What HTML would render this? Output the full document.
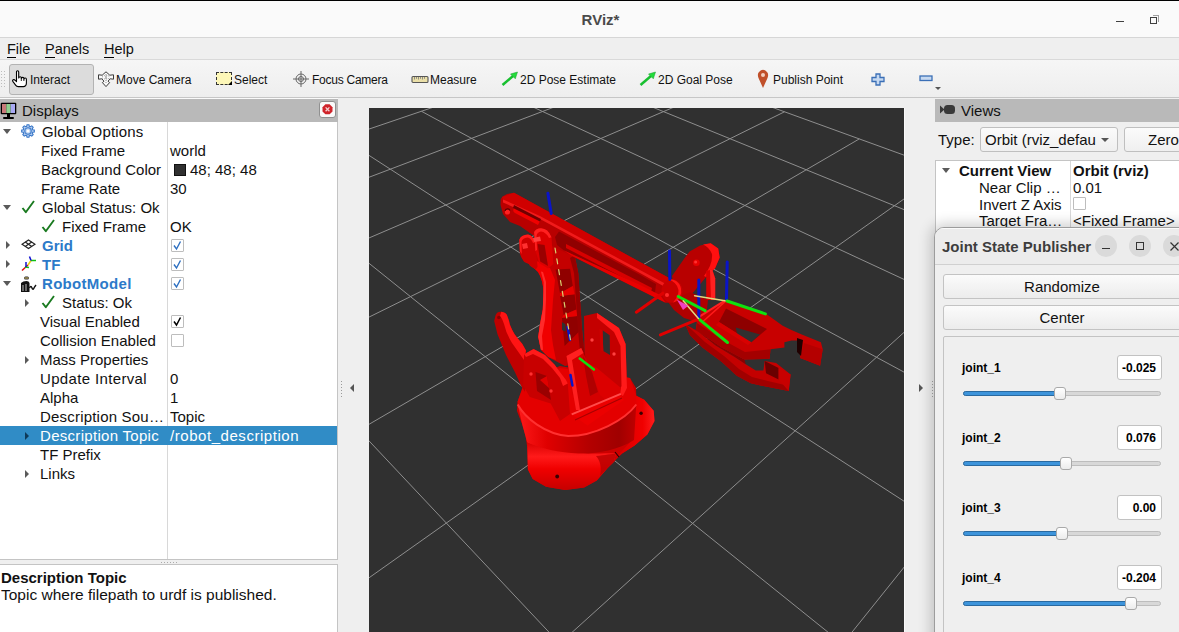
<!DOCTYPE html>
<html><head><meta charset="utf-8">
<style>
*{margin:0;padding:0;box-sizing:border-box}
html,body{width:1179px;height:632px;overflow:hidden;background:#efefef;font-family:"Liberation Sans",sans-serif;color:#111}
.a{position:absolute}
.t{position:absolute;white-space:nowrap}
#title{left:0;top:0;width:1179px;height:38px;background:#fafafa;border-top:1px solid #000;border-bottom:1px solid #d6d6d6}
#menu{left:0;top:38px;width:1179px;height:22px;background:#efefef;border-bottom:1px solid #d9d9d9}
#tool{left:0;top:60px;width:1179px;height:38px;background:linear-gradient(#f6f6f6,#eeeeee);border-bottom:1px solid #c6c6c6}
.mi{font-size:14.5px;top:0;line-height:22px}
.mi u{text-decoration:none;border-bottom:1px solid #000;}
.tb{font-size:12px;line-height:14px;top:13px}
.hdr{background:#b9b9b9;height:23px;top:99px}
.tree{background:#fff;border-right:1px solid #c4c4c4}
.r{position:absolute;white-space:nowrap;font-size:15px;line-height:19px;height:19px}
.blue{color:#2c7ac9;font-weight:bold}
.cb{position:absolute;width:13px;height:13px;border:1px solid #bdbdbd;background:#fff;border-radius:1px}
.ad{position:absolute;width:0;height:0;border-left:4px solid transparent;border-right:4px solid transparent;border-top:5px solid #5a5a5a}
.ar{position:absolute;width:0;height:0;border-top:4px solid transparent;border-bottom:4px solid transparent;border-left:4px solid #5a5a5a}
.vr{position:absolute;white-space:nowrap;font-size:15px;line-height:17px;height:17px}
.jl{position:absolute;white-space:nowrap;font-size:12px;font-weight:bold;line-height:14px;color:#000}
.jv{position:absolute;width:45px;height:25px;background:#fff;border:1px solid #c2c2c2;border-radius:3px;font-size:12px;font-weight:bold;line-height:25px;text-align:right;padding-right:5px;color:#000}
.gr{position:absolute;left:963px;width:198px;height:5px;border-radius:3px;background:#d8d8d8;border:1px solid #bdbdbd}
.gf{position:absolute;left:963px;height:5px;border-radius:3px;background:#3d94db;border:1px solid #2a6aa0}
.hd{position:absolute;width:12px;height:13px;background:linear-gradient(#ffffff,#ececec);border:1px solid #a9a9a9;border-radius:3px}
.btn{position:absolute;background:linear-gradient(#fbfbfb,#ececec);border:1px solid #c3c3c3;border-radius:3px;font-size:15px;text-align:center;color:#111}
</style></head><body>

<!-- Title bar -->
<div id="title" class="a">
  <div class="t" style="left:0;width:1179px;text-align:center;top:9px;font-size:15px;font-weight:bold;color:#4a4a4a;line-height:19px;padding-left:22px">RViz*</div>
  <div class="a" style="left:1116px;top:20px;width:8px;height:1.2px;background:#404040"></div>
  <div class="a" style="left:1150px;top:16px;width:6.5px;height:6.5px;border:1.2px solid #404040"></div>
  <div class="a" style="left:1152.5px;top:14px;width:6px;height:6.5px;border-top:1px solid #a0a0a0;border-right:1px solid #a0a0a0"></div>
</div>

<!-- Menu bar -->
<div id="menu" class="a">
  <div class="t mi" style="left:7px"><u>F</u>ile</div>
  <div class="t mi" style="left:45px"><u>P</u>anels</div>
  <div class="t mi" style="left:104px"><u>H</u>elp</div>
</div>

<!-- Toolbar -->
<div id="tool" class="a">
  <svg class="a" style="left:0;top:10px" width="8" height="18"><g fill="#bdbdbd"><rect x="1" y="1" width="1" height="1"/><rect x="4" y="1" width="1" height="1"/><rect x="1" y="4" width="1" height="1"/><rect x="4" y="4" width="1" height="1"/><rect x="1" y="7" width="1" height="1"/><rect x="4" y="7" width="1" height="1"/><rect x="1" y="10" width="1" height="1"/><rect x="4" y="10" width="1" height="1"/><rect x="1" y="13" width="1" height="1"/><rect x="4" y="13" width="1" height="1"/><rect x="1" y="16" width="1" height="1"/><rect x="4" y="16" width="1" height="1"/></g></svg>
  <div class="a" style="left:9px;top:4px;width:85px;height:31px;background:#dcdcdc;border:1px solid #b3b3b3;border-radius:3px"></div>
  <!-- hand icon -->
  <svg class="a" style="left:11px;top:10px" width="18" height="18" viewBox="0 0 18 18"><path d="M5.5 2 Q5.5 0.8 6.6 0.8 Q7.7 0.8 7.7 2 V8 Q8.1 6.8 9.2 6.8 Q10.3 6.8 10.3 8 V8.5 Q10.7 7.4 11.8 7.4 Q12.9 7.4 12.9 8.5 V9 Q13.3 8 14.3 8 Q15.4 8 15.4 9.2 V13 Q15.4 16.6 12.2 16.6 H7.2 Q5.6 16.6 4.6 15.1 L1.8 11.3 Q1.2 10.3 2.2 9.8 Q3.2 9.3 4.2 10.3 L5.5 11.6 Z" fill="#fff" stroke="#000" stroke-width="1.1" stroke-linejoin="round"/><path d="M10.3 8.5 V11 M12.9 9 V11" stroke="#000" stroke-width="0.9"/></svg>
  <div class="t tb" style="left:30px">Interact</div>
  <!-- move camera icon -->
  <svg class="a" style="left:97px;top:11px" width="18" height="17" viewBox="0 0 18 17"><path d="M9 0.8 L12.8 4.2 L16.5 3.8 L16.5 8.2 L13.2 7.8 L11 10.2 L12.6 11.6 L9 15.6 L5.4 11.6 L7 10.2 L4.8 7.8 L1.5 8.2 L1.5 3.8 L5.2 4.2 Z" fill="#fafafa" stroke="#3a3a3a" stroke-width="1"/><path d="M5 5.5 Q9 3.5 13 5.5 M5 7 Q9 9 13 7 M9 3 V12" stroke="#777" stroke-width="0.8" fill="none" stroke-dasharray="1 1"/><rect x="8" y="4.8" width="2" height="2.6" fill="#bbb"/></svg>
  <div class="t tb" style="left:116px">Move Camera</div>
  <!-- select icon -->
  <div class="a" style="left:216px;top:12px;width:16px;height:13px;background:#fdf7b8;border:1px dashed #333"></div>
  <div class="a" style="left:228px;top:21px;width:0;height:0;border-left:4px solid transparent;border-bottom:4px solid #000"></div>
  <div class="t tb" style="left:234px">Select</div>
  <!-- focus camera -->
  <svg class="a" style="left:292px;top:10px" width="18" height="18" viewBox="0 0 18 18"><g fill="none" stroke="#666" stroke-width="1"><circle cx="9" cy="9" r="5"/><circle cx="9" cy="9" r="2.5"/><path d="M9 1 V17 M1 9 H17"/></g></svg>
  <div class="t tb" style="left:312px;letter-spacing:-0.25px">Focus Camera</div>
  <!-- measure -->
  <svg class="a" style="left:411px;top:15px" width="18" height="9" viewBox="0 0 18 9"><rect x="1" y="1.5" width="16" height="6" rx="1" fill="#eadfa8" stroke="#555" stroke-width="1.1"/><path d="M3.5 2 V4.5 M5.5 2 V3.8 M7.5 2 V4.5 M9.5 2 V3.8 M11.5 2 V4.5 M13.5 2 V3.8" stroke="#777" stroke-width="0.8"/></svg>
  <div class="t tb" style="left:430px">Measure</div>
  <!-- pose estimate -->
  <svg class="a" style="left:501px;top:11px" width="18" height="16" viewBox="0 0 18 16"><path d="M1.5 14 L12 5" stroke="#18c030" stroke-width="2.5"/><path d="M9.5 3 L16.5 1 L14.3 7.8 Z" fill="#22dd3a" stroke="#149a28" stroke-width="0.5"/></svg>
  <div class="t tb" style="left:520px">2D Pose Estimate</div>
  <svg class="a" style="left:639px;top:11px" width="18" height="16" viewBox="0 0 18 16"><path d="M1.5 14 L12 5" stroke="#18c030" stroke-width="2.5"/><path d="M9.5 3 L16.5 1 L14.3 7.8 Z" fill="#22dd3a" stroke="#149a28" stroke-width="0.5"/></svg>
  <div class="t tb" style="left:658px">2D Goal Pose</div>
  <!-- publish point -->
  <svg class="a" style="left:757px;top:9px" width="12" height="20" viewBox="0 0 12 20"><path d="M6 19 L1.5 9 Q0 5 2 3 Q4 0.8 6 0.8 Q8 0.8 10 3 Q12 5 10.5 9 Z" fill="#c0502a"/><circle cx="6" cy="6" r="2" fill="#f3d0c0"/></svg>
  <div class="t tb" style="left:773px">Publish Point</div>
  <!-- plus -->
  <svg class="a" style="left:871px;top:13px" width="14" height="13" viewBox="0 0 14 13"><path d="M5 1 H9 V4.5 H13 V8.5 H9 V12 H5 V8.5 H1 V4.5 H5 Z" fill="#c6d9f1" stroke="#3b6fb6" stroke-width="1.3"/></svg>
  <svg class="a" style="left:919px;top:15px" width="14" height="7" viewBox="0 0 14 7"><rect x="1" y="1" width="12" height="4.5" fill="#c6d9f1" stroke="#3b6fb6" stroke-width="1.3"/></svg>
  <div class="a" style="left:935px;top:27px;width:0;height:0;border-left:3px solid transparent;border-right:3px solid transparent;border-top:3px solid #555"></div>
</div>

<!-- Left dock -->
<div class="a" style="left:0;top:98px;width:338px;height:1px;background:#fafafa"></div>
<div class="a hdr" style="left:0;width:338px"></div>
<svg class="a" style="left:0;top:102px" width="18" height="19" viewBox="0 0 18 19"><rect x="0.7" y="0.7" width="15.6" height="11.6" rx="1" fill="#000"/><rect x="2" y="2" width="4.3" height="9" fill="#c87a7a"/><rect x="6.3" y="2" width="4.4" height="9" fill="#8fd08f"/><rect x="10.7" y="2" width="4.3" height="9" fill="#a9a9f3"/><rect x="7" y="12" width="3" height="3" fill="#000"/><rect x="3" y="15" width="11" height="2" rx="1" fill="#000"/></svg>
<div class="t" style="left:22px;top:99px;font-size:15px;line-height:23px">Displays</div>
<div class="a" style="left:319px;top:101px;width:17px;height:17px;background:#fafafa;border:1px solid #909090;border-radius:3px"></div>
<svg class="a" style="left:320px;top:102px" width="15" height="15" viewBox="0 0 15 15"><path d="M5.4 2.3 H9.6 L12.5 5.2 V9.4 L9.6 12.3 H5.4 L2.5 9.4 V5.2 Z" fill="#d0242b"/><path d="M5.6 5.4 L9.4 9.2 M9.4 5.4 L5.6 9.2" stroke="#f4d4d4" stroke-width="1.3"/></svg>

<div class="a tree" style="left:0;top:122px;width:338px;height:438px"></div>
<div class="a" style="left:167px;top:122px;width:1px;height:438px;background:#d8d8d8"></div>
<!-- selection row -->
<div class="a" style="left:0;top:426px;width:337px;height:19px;background:#308cc6"></div>

<!-- Tree rows -->
<div class="ad" style="left:3px;top:129px"></div>
<svg class="a" style="left:21px;top:124px" width="14" height="14" viewBox="0 0 14 14"><path d="M11.72 5.67 L13.32 6.02 L13.32 7.98 L11.72 8.33 L11.28 9.39 L12.17 10.78 L10.78 12.17 L9.39 11.28 L8.33 11.72 L7.98 13.32 L6.02 13.32 L5.67 11.72 L4.61 11.28 L3.22 12.17 L1.83 10.78 L2.72 9.39 L2.28 8.33 L0.68 7.98 L0.68 6.02 L2.28 5.67 L2.72 4.61 L1.83 3.22 L3.22 1.83 L4.61 2.72 L5.67 2.28 L6.02 0.68 L7.98 0.68 L8.33 2.28 L9.39 2.72 L10.78 1.83 L12.17 3.22 L11.28 4.61 Z" fill="#b4cdf0" stroke="#3a78c8" stroke-width="1.1"/><circle cx="7" cy="7" r="3.2" fill="none" stroke="#3a78c8" stroke-width="1.1"/><circle cx="7" cy="7" r="1.6" fill="#fff"/></svg>
<div class="r" style="left:42px;top:122px;letter-spacing:0.15px">Global Options</div>
<div class="r" style="left:41px;top:141px">Fixed Frame</div><div class="r" style="left:170px;top:141px">world</div>
<div class="r" style="left:41px;top:160px">Background Color</div>
<div class="a" style="left:174px;top:164px;width:12px;height:12px;background:#303030;border:1px solid #111"></div>
<div class="r" style="left:190px;top:160px">48; 48; 48</div>
<div class="r" style="left:41px;top:179px">Frame Rate</div><div class="r" style="left:170px;top:179px">30</div>
<div class="ad" style="left:3px;top:205px"></div>
<svg class="a" style="left:20px;top:199px" width="16" height="16" viewBox="0 0 16 16"><path d="M2.5 9 L5.8 13.2 L14 2" fill="none" stroke="#1a7a20" stroke-width="1.9" stroke-linejoin="round"/></svg>
<div class="r" style="left:42px;top:198px">Global Status: Ok</div>
<svg class="a" style="left:40px;top:218px" width="16" height="16" viewBox="0 0 16 16"><path d="M2.5 9 L5.8 13.2 L14 2" fill="none" stroke="#1a7a20" stroke-width="1.9" stroke-linejoin="round"/></svg>
<div class="r" style="left:62px;top:217px">Fixed Frame</div><div class="r" style="left:170px;top:217px">OK</div>
<div class="ar" style="left:6px;top:241px"></div>
<svg class="a" style="left:21px;top:239px" width="15" height="11" viewBox="0 0 15 11"><g fill="none" stroke="#222" stroke-width="1.2"><path d="M7.5 1 L14 5.2 L7.5 9.5 L1 5.2 Z"/><path d="M4.2 3 L10.8 7.4 M10.8 3 L4.2 7.4"/></g></svg>
<div class="r blue" style="left:42px;top:236px">Grid</div>
<div class="cb" style="left:171px;top:239px"></div>
<svg class="a" style="left:171px;top:239px" width="13" height="13" viewBox="0 0 13 13"><path d="M3 6.5 L5.5 10 L9.5 2.5" fill="none" stroke="#2d6fc0" stroke-width="1.4"/></svg>
<div class="ar" style="left:6px;top:260px"></div>
<svg class="a" style="left:20px;top:256px" width="17" height="16" viewBox="0 0 17 16"><g fill="none" stroke-width="1.5"><path d="M8 9 L2 14.5" stroke="#e01010"/><path d="M8 9 L11 4.5" stroke="#e8d010"/><path d="M11 4.5 L16 4.5" stroke="#10c010"/><path d="M11 4.5 L9.5 0.5" stroke="#1010d0"/><path d="M5 11 L9 11.5" stroke="#10c010"/><path d="M6 11 L6 6" stroke="#1010d0"/></g></svg>
<div class="r blue" style="left:42px;top:255px">TF</div>
<div class="cb" style="left:171px;top:258px"></div>
<svg class="a" style="left:171px;top:258px" width="13" height="13" viewBox="0 0 13 13"><path d="M3 6.5 L5.5 10 L9.5 2.5" fill="none" stroke="#2d6fc0" stroke-width="1.4"/></svg>
<div class="ad" style="left:3px;top:281px"></div>
<svg class="a" style="left:20px;top:276px" width="17" height="17" viewBox="0 0 17 17"><rect x="4" y="0.5" width="5" height="3" rx="1.5" fill="#223" /><rect x="4.5" y="1.5" width="4" height="1" fill="#e8d060"/><path d="M1 16 V7 Q3 5 6.5 5 Q9 5 9.5 7 V16 Z" fill="#111"/><path d="M3 9 V15 M6 8 V15" stroke="#eee" stroke-width="0.8"/><path d="M9.5 12 Q11 9 12 12 Q13 15 14.5 11 L16 9" fill="none" stroke="#111" stroke-width="1.4"/></svg>
<div class="r blue" style="left:42px;top:274px;letter-spacing:0.3px">RobotModel</div>
<div class="cb" style="left:171px;top:277px"></div>
<svg class="a" style="left:171px;top:277px" width="13" height="13" viewBox="0 0 13 13"><path d="M3 6.5 L5.5 10 L9.5 2.5" fill="none" stroke="#2d6fc0" stroke-width="1.4"/></svg>
<div class="ar" style="left:25px;top:299px"></div>
<svg class="a" style="left:40px;top:294px" width="16" height="16" viewBox="0 0 16 16"><path d="M2.5 9 L5.8 13.2 L14 2" fill="none" stroke="#1a7a20" stroke-width="1.9" stroke-linejoin="round"/></svg>
<div class="r" style="left:62px;top:293px">Status: Ok</div>
<div class="r" style="left:40px;top:312px">Visual Enabled</div>
<div class="cb" style="left:171px;top:315px"></div>
<svg class="a" style="left:171px;top:315px" width="13" height="13" viewBox="0 0 13 13"><path d="M3 6.5 L5.5 10 L9.5 2.5" fill="none" stroke="#000" stroke-width="1.5"/></svg>
<div class="r" style="left:40px;top:331px">Collision Enabled</div>
<div class="cb" style="left:171px;top:334px"></div>
<div class="ar" style="left:25px;top:356px"></div>
<div class="r" style="left:40px;top:350px">Mass Properties</div>
<div class="r" style="left:40px;top:369px;letter-spacing:0.35px">Update Interval</div><div class="r" style="left:170px;top:369px">0</div>
<div class="r" style="left:40px;top:388px">Alpha</div><div class="r" style="left:170px;top:388px">1</div>
<div class="r" style="left:40px;top:407px;letter-spacing:0.2px">Description Sou…</div><div class="r" style="left:170px;top:407px">Topic</div>
<div class="ar" style="left:25px;top:432px;border-left-color:#0e3a5a"></div>
<div class="r" style="left:40px;top:426px;color:#fff;letter-spacing:0.3px">Description Topic</div><div class="r" style="left:170px;top:426px;color:#fff;letter-spacing:0.55px">/robot_description</div>
<div class="r" style="left:40px;top:445px">TF Prefix</div>
<div class="ar" style="left:25px;top:470px"></div>
<div class="r" style="left:40px;top:464px">Links</div>

<!-- splitter -->
<div class="a" style="left:0;top:559px;width:338px;height:1px;background:#c4c4c4"></div>
<div class="a" style="left:0;top:564px;width:338px;height:1px;background:#c4c4c4"></div>
<svg class="a" style="left:160px;top:561px" width="20" height="3"><g fill="#aaa"><rect x="1" y="1" width="1" height="1"/><rect x="4" y="1" width="1" height="1"/><rect x="7" y="1" width="1" height="1"/><rect x="10" y="1" width="1" height="1"/><rect x="13" y="1" width="1" height="1"/><rect x="16" y="1" width="1" height="1"/></g></svg>
<div class="a" style="left:0;top:565px;width:338px;height:67px;background:#fff;border-right:1px solid #c4c4c4"></div>
<div class="t" style="left:1px;top:569px;font-size:15px;font-weight:bold;line-height:17px">Description Topic</div>
<div class="t" style="left:1px;top:586px;font-size:15.5px;line-height:17px">Topic where filepath to urdf is published.</div>

<!-- left splitter strip -->
<div class="a" style="left:338px;top:98px;width:31px;height:534px;background:#efefef"></div>
<svg class="a" style="left:340px;top:381px" width="4" height="18"><g fill="#9a9a9a"><rect x="1" y="0" width="1" height="1"/><rect x="1" y="3" width="1" height="1"/><rect x="1" y="6" width="1" height="1"/><rect x="1" y="9" width="1" height="1"/><rect x="1" y="12" width="1" height="1"/><rect x="1" y="15" width="1" height="1"/></g></svg>
<div class="a" style="left:350px;top:384px;width:0;height:0;border-top:4px solid transparent;border-bottom:4px solid transparent;border-right:4px solid #555"></div>

<!-- 3D view -->
<svg class="a" style="left:369px;top:108px" width="535" height="524" viewBox="369 108 535 524">
  <rect x="369" y="108" width="535" height="524" fill="#303030"/>
  <g stroke="#8e8e8e" stroke-width="1" fill="none"><line x1="-513.5" y1="428.9" x2="-6158.4" y2="20937.4"/><line x1="-297.5" y1="355.5" x2="304.1" y2="20947.6"/><line x1="-121.8" y1="295.8" x2="2552.0" y2="8316.0"/><line x1="23.9" y1="246.3" x2="1993.2" y2="3336.5"/><line x1="146.7" y1="204.6" x2="1844.2" y2="2008.7"/><line x1="251.7" y1="169.0" x2="1775.1" y2="1393.4"/><line x1="342.4" y1="138.2" x2="1735.3" y2="1038.5"/><line x1="421.5" y1="111.3" x2="1709.4" y2="807.5"/><line x1="491.2" y1="87.6" x2="1691.1" y2="645.1"/><line x1="553.0" y1="66.6" x2="1677.6" y2="524.8"/><line x1="608.2" y1="47.8" x2="1667.2" y2="432.1"/><line x1="-513.5" y1="428.9" x2="608.2" y2="47.8"/><line x1="-539.0" y1="521.6" x2="660.3" y2="66.8"/><line x1="-572.2" y1="641.9" x2="718.7" y2="87.9"/><line x1="-616.8" y1="804.2" x2="784.5" y2="111.8"/><line x1="-680.4" y1="1035.2" x2="859.3" y2="138.9"/><line x1="-778.1" y1="1390.1" x2="944.9" y2="170.0"/><line x1="-947.5" y1="2005.4" x2="1044.0" y2="205.9"/><line x1="-1312.9" y1="3333.3" x2="1159.9" y2="248.0"/><line x1="-2684.2" y1="8315.2" x2="1297.5" y2="297.9"/><line x1="-2490.3" y1="20943.2" x2="1463.4" y2="358.1"/><line x1="3970.2" y1="20953.3" x2="1667.2" y2="432.1"/></g>
  <defs>
<linearGradient id="cyl" x1="517" x2="637" y1="0" y2="0" gradientUnits="userSpaceOnUse"><stop offset="0" stop-color="#ff1a1a"/><stop offset="0.25" stop-color="#e00000"/><stop offset="0.6" stop-color="#b40000"/><stop offset="0.85" stop-color="#a00000"/><stop offset="1" stop-color="#c00000"/></linearGradient>
<linearGradient id="belly" x1="0" x2="0" y1="442" y2="491" gradientUnits="userSpaceOnUse"><stop offset="0" stop-color="#d80000"/><stop offset="0.3" stop-color="#ff1a1a"/><stop offset="0.55" stop-color="#f00000"/><stop offset="1" stop-color="#c40000"/></linearGradient>
<linearGradient id="flng" x1="612" x2="656" y1="0" y2="0" gradientUnits="userSpaceOnUse"><stop offset="0" stop-color="#d00000"/><stop offset="0.7" stop-color="#f00000"/><stop offset="1" stop-color="#ff2020"/></linearGradient>
<linearGradient id="wr" x1="680" x2="720" y1="0" y2="0" gradientUnits="userSpaceOnUse"><stop offset="0" stop-color="#a80000"/><stop offset="0.6" stop-color="#b80000"/><stop offset="0.8" stop-color="#ff1010"/><stop offset="1" stop-color="#d00000"/></linearGradient>
</defs>

<!-- ===== BASE ===== -->
<path d="M517.7,401.3 L516.9,410.8 L522.4,425.1 L525.6,436.1 L527.2,447.2 L527.9,469.4 L532.7,478.9 L546.1,486.8 L565.1,490 L584.1,487.6 L596.8,480.4 L607.8,467.8 L614.2,461.5 L622.1,453.5 L634.7,445.6 L647.4,434.6 L654.5,421.1 L653.7,410.8 L644.2,399.7 L636.3,395.8 L636,388 L630,378 L560,366 L525,380 Z" fill="#cc0000"/>
<path d="M612,462 L622.1,453.5 L634.7,445.6 L647.4,434.6 L654.5,421.1 L653.7,410.8 L644.2,399.7 L636.3,395.8 L634,410 L632,440 Z" fill="url(#flng)"/>
<path d="M517.7,404.5 C525,418 545,434 568.3,436.1 C595,436 625,420 636.3,404.5 L634,440 C615,452 590,455 568,453 C550,451 535,447 527.2,442.5 L522.4,425.1 Z" fill="url(#cyl)"/>
<path d="M527.2,442.5 C540,448 560,453 578,453.5 C595,454 608,453 615.8,453.5 L614.2,461.5 L607.8,467.8 L596.8,480.4 L584.1,487.6 L565.1,490 L546.1,486.8 L532.7,478.9 L527.9,469.4 Z" fill="url(#belly)"/>
<path d="M596,456 C605,455 612,454 615.8,453.5 L614.2,461.5 L607.8,467.8 L600,476 C602,468 600,460 596,456 Z" fill="#b80000" opacity="0.8"/>
<circle cx="557.2" cy="476.5" r="1.9" fill="#3a0000"/>
<circle cx="641.1" cy="413.2" r="1.7" fill="#3a0000"/>
<path d="M615,452 L619,457" stroke="#300000" stroke-width="1.2"/>
<!-- cylinder top face -->
<path d="M517.7,401.3 L525,382 L560,368 L630,378 L636.3,395.8 L636.3,404.5 C625,420 595,436 568.3,436.1 C545,434 525,418 517.7,404.5 Z" fill="#e40000"/>
<path d="M517.7,404.5 C525,418 545,434 568.3,436.1 C595,436 625,420 636.3,404.5" stroke="#ff3030" stroke-width="2" fill="none"/>

<!-- back right bracket plate -->
<path d="M584,316 L597,313 L619,328 L625.6,344 L627,388 L623,396 L600,405 L585,395 Z" fill="#c40000"/>
<path d="M619,328 L625.6,344 L627,388 L623,396 L618,394 L621.5,386 L620.5,346 L614,332 L597,318 L597,313 Z" fill="#ff1a1a"/>
<path d="M566,352 L597,368 L621,388 L620,396 L600,405 L572,395 Z" fill="#dc0000"/>
<path d="M602.5,330.2 L609.7,335.3 L610,355.1 L603.3,351.1 Z" fill="#303030"/><path d="M599.5,329 L602.5,330.2 L603.3,351.1 L600.5,350 Z" fill="#d00000"/>

<circle cx="592" cy="340" r="1.7" fill="#ff4040"/>
<circle cx="614" cy="354" r="1.7" fill="#ff4040"/>

<!-- left hook plate -->
<path d="M495.6,315.2 Q497,311.5 501.3,311.8 Q506,312.5 507,315.2 Q509,320 509.9,324.7 Q512,330 514.6,334.2 Q518,339 522.2,343.7 L526,350.4 L525,392 L521,385.5 L515,372.2 L506,355.1 L497.5,334.2 L494.2,321 Z" fill="#c00000"/>
<path d="M501.3,311.8 Q506,312.5 507,315.2 Q509,320 509.9,324.7 Q512,330 514.6,334.2 Q518,339 522.2,343.7 L526,350.4 L524,360 Q517,350 512,343 Q506,333 504,324 Q502,318 500,316 Z" fill="#ff1414"/>
<circle cx="498.8" cy="317.5" r="1.7" fill="#8a0000"/>

<!-- ===== VERTICAL LINK ===== -->
<path d="M522,258 Q532,266 538,272 Q543,280 543.5,292 L542.8,309.6 L540,324.2 L538.2,337 L540.9,349.7 L548.2,357 L565,366 L586,362 L583.7,346.1 L581.9,327.9 L580.1,300.5 L578.3,273.2 L574.6,255 L555,240 L540,236 Z" fill="#c40000"/>
<path d="M522,258 Q532,266 538,272 Q543,280 543.5,292 L542.8,309.6 L540,324.2 L538.2,337 L540.9,349.7 L548.2,357 L556,360 L553,345 L551,330 L553,300 L555,280 L550,268 L540,262 Z" fill="#f00000"/>
<path d="M540.9,271.4 L543.7,282.3 L542.8,309.6 L540,324.2 L538.2,337 L540.9,349.7 L543,350 L542,336 L545,320 L546,300 L546,282 L543,272 Z" fill="#ff2a2a"/>
<path d="M555.5,269.6 L570.1,268.7 L572.8,286 L560,293.3 Z" fill="#900000"/>
<path d="M560,296 L574.6,294.2 L576.4,309.6 L563.7,315.1 Z" fill="#900000"/>
<path d="M561.9,317.8 L577.4,316 L579.2,331.5 L564.6,346.1 Z" fill="#900000"/>
<path d="M561.9,322 L565.5,324.2 L565.5,331.5 L562,330 Z" fill="#303030"/>
<path d="M560,293.3 L572.8,286 L574.6,294.2 L560,296 Z M563.7,315.1 L576.4,309.6 L577.4,316 L561.9,317.8 Z" fill="#e60000"/>
<path d="M574.6,255 L578.3,273.2 L580.1,300.5 L581.9,327.9 L583.7,346.1 L586,362 L581,362 L578,330 L576,300 L574,273 L570,258 Z" fill="#960000"/>

<!-- ===== WRIST ===== -->
<path d="M672,276 L685,257.6 L689.6,251.5 L700.2,245.5 L710.7,243.3 L718.2,248.5 L719.7,257.6 L715.2,268.1 L706.2,277.1 L691,295 L676,299 Z" fill="#b80000"/>
<path d="M703,244.5 L710.7,243.3 L718.2,248.5 L719.7,257.6 L715.2,268.1 L706.2,277.1 L704,276 Q713,264 712,254 Q709,247 703,244.5 Z" fill="#ff1010"/>

<circle cx="696.4" cy="262.8" r="3.3" fill="#e80000"/>
<circle cx="695.6" cy="262" r="1.5" fill="#ff3030"/>
<path d="M706.2,271.1 L712.2,269.6 L715.2,278.6 L715.2,300 L706.2,300 Z" fill="#d80000"/>
<path d="M710,270 L712.2,269.6 L715.2,278.6 L715.2,300 L711,300 Z" fill="#ff2020"/>
<path d="M668,302 L690,292 L708,300 L706,318 L697,322 L684,318 L674,310 Z" fill="#b00000"/>

<!-- ===== UPPER ARM BAR ===== -->
<path d="M500.7,199 L502.6,196.5 L507,194 L514,192.7 L670,278.6 L679.1,281.6 L682.9,289.1 L680.6,296.7 L673.1,302.7 L665.6,302.7 L571.6,255.7 L555,247.4 L537,238 L520,226 L510,222 L503,214 L500.5,205 Z" fill="#b80000"/>
<path d="M502,197 L514,192.7 L670,278.6 L666,284 L640,270 L540,216 L504,201 Z" fill="#d00000"/>
<path d="M503,199.5 L540,216 L640,270 L666,284 L665,287 L640,273 L540,219 L503,202.5 Z" fill="#ff2020" opacity="0.8"/>
<path d="M559,231.6 L640,274.7 L656,284 L655,293 L640,285 L564,250.6 L557,245 L555,237 Z" fill="#900000"/>
<path d="M566,244 L652,288 L651,292 L566,248 Z" fill="#d80000"/>
<path d="M564,250.6 L640,285 L660,295 L665.6,302.7 L571.6,255.7 Z" fill="#e80000"/>
<path d="M514,208 Q512,211 515,213 L538,225 L540,221 Z" fill="#f00000"/>
<path d="M514,205 L541,219 L540,221.5 L513,208 Z" fill="#700000"/>
<ellipse cx="672" cy="291" rx="10.5" ry="11.5" fill="#c80000"/><path d="M668,279.6 A10.5,11.5 0 0 1 673,302.5 Q679,296 678.5,290 Q677,282 668,279.6 Z" fill="#ff1414"/><circle cx="667" cy="295" r="2" fill="#ff2a2a"/>
<circle cx="507.5" cy="212" r="2.6" fill="#ff2020"/><path d="M505,211 A2.6,2.6 0 0 1 510,210.5" stroke="#600000" stroke-width="1.2" fill="none"/>

<!-- ears -->
<path d="M519.3,239.8 Q521,235 528,234.6 Q533,235.5 535,242.4 L537.6,266.7 L535.9,269.3 Q530,267 528.9,264.1 Q523,262 522.8,259.8 Q519.5,255 519.8,251.1 Z" fill="#cc0000"/>
<path d="M519.3,239.8 Q521,235 528,234.6 Q533,235.5 535,242.4 L533,243 Q531,238 527.5,237.5 Q522,238 521.5,242 L521.8,254 L519.8,251.1 Z" fill="#ff1a1a"/>
<path d="M522,244 L527,243 L528,248 L523,249 Z" fill="#ff3030"/>
<path d="M534.1,232 Q536,228.5 541,228.3 Q548,228.5 551.5,237.2 L553.3,264.1 L548,268.5 L539.3,263.3 L535.4,251.1 Z" fill="#dc0000"/>
<path d="M534.1,232 Q536,228.5 541,228.3 Q548,228.5 551.5,237.2 L549,238 Q546,232 541,231.5 Q537,232 536.5,236 L537,250 L535.4,251.1 Z" fill="#ff2020"/>
<path d="M537.6,244.1 L544.6,245 L548,265.9 L540.2,261.5 Z" fill="#9a0000"/>
<path d="M533,238 L540,236.5 L541,241 L534,242 Z" fill="#ff4040"/>

<!-- front left bracket plate -->
<path d="M524.1,354.2 L533.6,349 L545,355.1 L554.5,364.6 L560.2,372.2 L565.9,379.8 L567.8,383.6 L570,414 L560,421 L550.7,403.6 L529.8,396.9 L523.2,385.5 Z" fill="#c80000"/>
<path d="M524.1,354.2 L533.6,349 L545,355.1 L554.5,364.6 L560.2,372.2 L565.9,379.8 L567.8,383.6 L563,386 L560,378 L552,368 L543,359 L533,354 L526,357 Z" fill="#ff1a1a"/>
<path d="M535.5,372 L547,376 L551,400 L537,391 Z" fill="#9a0000"/>
<path d="M540,380 L547,376 L549,388 Z" fill="#e00000"/>
<circle cx="531" cy="374" r="1.7" fill="#ff3030"/>
<circle cx="551" cy="391" r="1.7" fill="#ff3030"/>
<!-- center bracket -->
<path d="M566.5,356 L581.2,347.9 L592,372 L600,395 L604.9,399 L586,412 L576,410 Z" fill="#d40000"/>
<path d="M566.5,356 L581.2,347.9 L583.5,353 L572,360 L580,410 L576,410 Z" fill="#ff2020"/><path d="M583,356 L592,372 L598,392 L590,396 L586,376 Z" fill="#b00000"/>
<path d="M571.7,414.4 L620.8,393.8 L623.9,400.1 L587.5,425.4 Z" fill="#ec0000"/>
<path d="M571.7,414.4 L620.8,393.8" stroke="#ff4a4a" stroke-width="2"/>
<path d="M575,420 L622,398" stroke="#a80000" stroke-width="1.2"/>

<!-- ===== GRIPPER ===== -->
<path d="M690,326 L721.8,347.4 L744.4,359.6 L745.7,364.3 L734.3,356.7 L715.3,345.3 L699,332 Z" fill="#8a0000"/>
<path d="M685,324 L690,335.2 L702.7,347.8 L721.6,361.8 L736.8,375.7 L750.8,383.3 L768.5,387.1 L788.7,390.9 L790.6,374.4 L776.1,363 L764.7,361.1 L763.4,370.6 L755.8,370.6 L745.7,364.3 L734.3,356.7 L715.3,345.3 L699,332 Z" fill="#c40000"/>
<path d="M685,324 L690,335.2 L702.7,347.8 L721.6,361.8 L736.8,375.7 L750.8,383.3 L768.5,387.1 L788.7,390.9 L789,386 L768,381 L752,377 L739,369 L724,356 L705,342 L692,330 Z" fill="#a00000"/>
<path d="M764.7,361.1 L778.6,368.1 L778.6,379.5 L766,373.2 Z" fill="#6a0000"/>
<path d="M778.6,368.1 L790.6,374.4 L788.7,390.9 L778.6,379.5 Z" fill="#c80000"/>
<path d="M697.4,317.8 L725.2,300.4 L767,314.4 L782.7,325.7 L791.4,330 L801.8,334.4 L820.9,342.2 L822.7,349.2 L820.1,365.7 L800.1,357.9 L799.2,340.5 L791.4,340.5 L784.4,342.2 L784.4,347.4 L770.5,349.2 L769.6,358.7 L744.4,359.6 L721.8,347.4 L695.7,330 Z" fill="#c80000"/>
<path d="M695.7,330 L721.8,347.4 L744.4,359.6 L769.6,358.7 L770.5,349.2 L745,352 L723,340 L697,323 Z" fill="#a40000"/>
<path d="M800.1,357.9 L820.1,365.7 L822.7,349.2 L804,343 L802,350 Z" fill="#b40000"/>
<path d="M797,338 L803,340 L801,356 L797,352 Z" fill="#200000"/>
<path d="M726,308.5 L767,329 L751.3,342.2 L719,322 Z" fill="#8e0000"/><path d="M735.7,327.4 L760,334.4 L751.3,342.2 L737.4,335.2 Z" fill="#303030"/><path d="M719,322 L751.3,342.2 L748,345 L716,325 Z" fill="#d80000"/>

<path d="M697.4,317.8 L725.2,300.4" stroke="#ff2020" stroke-width="2"/>
<path d="M702.7,321.8 L726.5,300.4" stroke="#ff1a1a" stroke-width="1.5"/>

<!-- ===== AXES ===== -->
<g stroke-linecap="round">
<path d="M547.9,193.2 L551.2,213.5" stroke="#0a14c8" stroke-width="3"/>
<path d="M669.5,251 L669.8,279.5" stroke="#0a14c8" stroke-width="3"/>
<path d="M698.8,280 L698.8,318" stroke="#0a14c8" stroke-width="3"/>
<path d="M727.2,262 L726.5,299.6" stroke="#0a14c8" stroke-width="3"/>
<path d="M567.5,327 L570,340" stroke="#0a14c8" stroke-width="2.5"/>
<path d="M570.5,375 L572.4,385.4" stroke="#0a14c8" stroke-width="2.5"/>
<path d="M555,248 L570.5,340" stroke="#d8d070" stroke-width="1.2" stroke-dasharray="5 6"/>
<path d="M579.7,358.5 L593.9,369.6" stroke="#10e010" stroke-width="2.5"/>
<path d="M678.2,296.5 L705.1,310.7" stroke="#10e010" stroke-width="3"/>
<path d="M727,301 L765.4,313.9" stroke="#10e010" stroke-width="3"/>
<path d="M699.6,319.7 L727.5,342.5" stroke="#10e010" stroke-width="3"/>
<path d="M662.9,293.2 L636.3,312.2" stroke="#e00000" stroke-width="3"/>
<path d="M697.1,319.7 L660.4,334.9" stroke="#e00000" stroke-width="3"/>
<path d="M694.6,295.7 L724.9,300.8" stroke="#e0d880" stroke-width="1.5"/>
<path d="M683.2,300.8 L698.4,318.5" stroke="#e0d880" stroke-width="1.5"/>
</g>
<path d="M676.8,299.5 L688.2,305.8 L683,310 Z" fill="#f040c0"/>

</svg>
<div class="a" style="left:904px;top:108px;width:1px;height:524px;background:#fafafa"></div>

<!-- right strip -->
<div class="a" style="left:905px;top:98px;width:30px;height:534px;background:#efefef"></div>
<div class="a" style="left:919px;top:384px;width:0;height:0;border-top:4px solid transparent;border-bottom:4px solid transparent;border-left:4px solid #555"></div>

<svg class="a" style="left:931px;top:381px" width="3" height="18"><g fill="#a4a4a4"><rect x="1" y="0" width="1" height="1"/><rect x="1" y="3" width="1" height="1"/><rect x="1" y="6" width="1" height="1"/><rect x="1" y="9" width="1" height="1"/><rect x="1" y="12" width="1" height="1"/><rect x="1" y="15" width="1" height="1"/></g></svg>
<!-- Right dock: Views -->
<div class="a hdr" style="left:935px;width:244px"></div>
<svg class="a" style="left:939px;top:104px" width="18" height="12" viewBox="0 0 18 12"><path d="M1 1.5 L5.5 5.5 L1 9.5 Z" fill="#3a3a3a"/><rect x="5" y="1" width="11" height="9" rx="3.5" fill="#3a3a3a"/></svg>
<div class="t" style="left:961px;top:99px;font-size:15px;line-height:23px">Views</div>
<div class="t" style="left:938px;top:130px;font-size:15px;line-height:19px">Type:</div>
<div class="a" style="left:980px;top:127px;width:138px;height:25px;background:linear-gradient(#fbfbfb,#efefef);border:1px solid #bfbfbf;border-radius:3px;overflow:hidden"></div>
<div class="t" style="left:985px;top:130px;font-size:15px;line-height:19px;width:111px;overflow:hidden">Orbit (rviz_default_plugins)</div>
<div class="a" style="left:1101px;top:138px;width:0;height:0;border-left:4px solid transparent;border-right:4px solid transparent;border-top:4px solid #555"></div>
<div class="a" style="left:1124px;top:127px;width:70px;height:25px;background:linear-gradient(#fbfbfb,#efefef);border:1px solid #bfbfbf;border-radius:3px"></div>
<div class="t" style="left:1148px;top:130px;font-size:15px;line-height:19px">Zero</div>

<div class="a" style="left:935px;top:160px;width:244px;height:80px;background:#fff;border-left:1px solid #c4c4c4;border-top:1px solid #c4c4c4"></div>
<div class="a" style="left:1070px;top:161px;width:1px;height:80px;background:#d8d8d8"></div>
<div class="ad" style="left:942px;top:168px"></div>
<div class="vr" style="left:959px;top:162px;font-weight:bold">Current View</div>
<div class="vr" style="left:1073px;top:162px;font-weight:bold">Orbit (rviz)</div>
<div class="vr" style="left:979px;top:179px">Near Clip …</div><div class="vr" style="left:1073px;top:179px">0.01</div>
<div class="vr" style="left:979px;top:196px">Invert Z Axis</div>
<div class="cb" style="left:1073px;top:197px"></div>
<div class="vr" style="left:979px;top:212px">Target Fra…</div><div class="vr" style="left:1073px;top:212px">&lt;Fixed Frame&gt;</div>

<!-- JSP window -->
<div class="a" style="left:934px;top:227px;width:260px;height:420px;background:#efefef;border:1px solid #9c9c9c;border-radius:10px 10px 0 0;overflow:hidden;box-shadow:0 0 14px 3px rgba(0,0,0,0.2)">
  <div class="a" style="left:0;top:0;width:260px;height:37px;background:#ececec;border-top:1px solid #fafafa;border-bottom:1px solid #d0d0d0"></div>
</div>
<div class="t" style="left:942px;top:237px;font-size:15px;font-weight:bold;line-height:19px;color:#3d3d3d">Joint State Publisher</div>
<div class="a" style="left:1095px;top:235px;width:22px;height:22px;border-radius:11px;background:#dadada"></div>
<div class="a" style="left:1102px;top:248px;width:8px;height:1.2px;background:#333"></div>
<div class="a" style="left:1129px;top:235px;width:22px;height:22px;border-radius:11px;background:#dadada"></div>
<div class="a" style="left:1136px;top:242px;width:8px;height:8px;border:1.2px solid #333"></div>
<div class="a" style="left:1163px;top:235px;width:22px;height:22px;border-radius:11px;background:#dadada"></div>
<svg class="a" style="left:1169px;top:241px" width="11" height="11"><path d="M1.5 1.5 L9.5 9.5 M9.5 1.5 L1.5 9.5" stroke="#333" stroke-width="1.2"/></svg>

<div class="btn" style="left:943px;top:274px;width:250px;height:25px;line-height:23px;padding-right:12px">Randomize</div>
<div class="btn" style="left:943px;top:305px;width:250px;height:25px;line-height:23px;padding-right:12px">Center</div>
<div class="a" style="left:943px;top:336px;width:250px;height:300px;border:1px solid #c3c3c3;border-radius:2px"></div>

<div class="jl" style="left:962px;top:361px">joint_1</div>
<div class="jv" style="left:1117px;top:355px">-0.025</div>
<div class="gr" style="top:391px"></div><div class="gf" style="top:391px;width:98px"></div><div class="hd" style="left:1054px;top:387px"></div>

<div class="jl" style="left:962px;top:431px">joint_2</div>
<div class="jv" style="left:1117px;top:425px">0.076</div>
<div class="gr" style="top:461px"></div><div class="gf" style="top:461px;width:104px"></div><div class="hd" style="left:1060px;top:457px"></div>

<div class="jl" style="left:962px;top:501px">joint_3</div>
<div class="jv" style="left:1117px;top:495px">0.00</div>
<div class="gr" style="top:531px"></div><div class="gf" style="top:531px;width:100px"></div><div class="hd" style="left:1056px;top:527px"></div>

<div class="jl" style="left:962px;top:571px">joint_4</div>
<div class="jv" style="left:1117px;top:565px">-0.204</div>
<div class="gr" style="top:601px"></div><div class="gf" style="top:601px;width:168px"></div><div class="hd" style="left:1125px;top:597px"></div>

</body></html>
